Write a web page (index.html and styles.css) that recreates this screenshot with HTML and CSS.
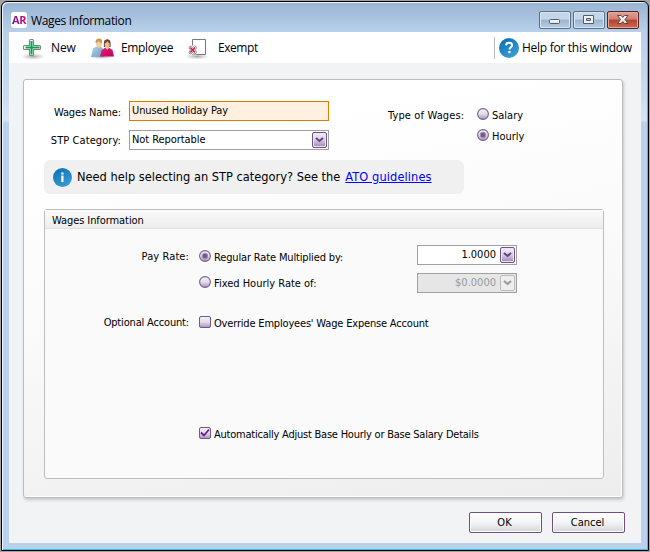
FILE: index.html
```html
<!DOCTYPE html>
<html lang="en">
<head>
<meta charset="utf-8">
<title>Wages Information</title>
<link rel="stylesheet" href="styles.css">
</head>
<body>
<svg class="defs" width="0" height="0" aria-hidden="true">
  <defs>
    <linearGradient id="orb" x1="0" y1="0" x2="0" y2="1"><stop offset="0" stop-color="#f5f1f8"/><stop offset=".5" stop-color="#e3dcea"/><stop offset="1" stop-color="#a692b9"/></linearGradient>
    <linearGradient id="blue" x1="0" y1="0" x2=".6" y2="1"><stop offset="0" stop-color="#056fb3"/><stop offset="1" stop-color="#3b9ad2"/></linearGradient>
    <radialGradient id="shade"><stop offset="0" stop-color="#777" stop-opacity=".65"/><stop offset="1" stop-color="#999" stop-opacity="0"/></radialGradient>
    <linearGradient id="shirt" x1="0" y1="0" x2="1" y2="1"><stop offset="0" stop-color="#b3d0e9"/><stop offset="1" stop-color="#6c9cc4"/></linearGradient>
    <linearGradient id="dress" x1="0" y1="0" x2="1" y2="1"><stop offset="0" stop-color="#e0237c"/><stop offset="1" stop-color="#bf0056"/></linearGradient>
    <linearGradient id="glyph" x1="0" y1="0" x2="0" y2="1"><stop offset="0" stop-color="#fff"/><stop offset="1" stop-color="#ddd"/></linearGradient>
  </defs>
</svg>
<div class="window">
  <header class="titlebar">
    <span class="app-icon">AR</span>
    <span class="title">Wages Information</span>
    <div class="controls">
      <span class="control"><svg width="30" height="16" viewBox="0 0 30 16"><rect x="9.500" y="7.500" width="10" height="4" rx="1" fill="url(#glyph)" stroke="#535c69"/></svg></span>
      <span class="control"><svg width="30" height="16" viewBox="0 0 30 16"><path d="M9.500 3.500h10v8h-10zM12.500 6.500v2h4v-2z" fill="#f2f2f2" fill-rule="evenodd" stroke="#535c69"/></svg></span>
      <span class="control close"><svg width="30" height="16" viewBox="0 0 30 16"><path d="M9.500 3.500h3.500l1.800 1.900 1.800-1.900h3.400l-3 4 3 4h-3.400l-1.800-1.900-1.800 1.900H9.500l3-4z" fill="url(#glyph)" stroke="#5d4246"/></svg></span>
    </div>
  </header>
  <main class="client">
    <nav class="toolbar">
      <span class="tool new">
        <svg width="24" height="26" viewBox="0 0 24 26"><ellipse cx="12" cy="20.500" rx="12" ry="3.500" fill="url(#shade)"/><path d="M8.500 4.500a1 1 0 0 1 1-1h2a1 1 0 0 1 1 1v5h6a1 1 0 0 1 1 1v2a1 1 0 0 1-1 1h-6v5a1 1 0 0 1-1 1h-2a1 1 0 0 1-1-1v-5h-5a1 1 0 0 1-1-1v-2a1 1 0 0 1 1-1h5z" fill="#fff" stroke="#7d8683" stroke-width="1.200"/><path d="M10.500 5v13.500M4.500 11.500h14" stroke="#00a650" stroke-width="2"/></svg>
        <span class="tool-text">New</span>
      </span>
      <span class="tool employee">
        <svg width="26" height="24" viewBox="0 0 26 24"><ellipse cx="13" cy="18.500" rx="13" ry="2.800" fill="url(#shade)"/><path d="M2 19 4 10.500l3.500-2h4l3.500 3V19z" fill="url(#shirt)"/><path d="M8 8l1.500 2.500L11.500 8V6H8z" fill="#efc99c"/><path d="m9.500 10.500-1 6 1 2 1-2z" fill="#8aaecb"/><ellipse cx="10" cy="5.200" rx="3" ry="4" fill="#f3cda0"/><path d="M6.500 5C6.300 2 7.500.5 10 .5s3.500 2 3 4.500c-1.500 0-2.500-1-3.500-1.700C8.500 4.500 7.500 4.600 6.500 5z" fill="#c69b50"/><path d="m11 18.500 1.500-6 3-2.500h5l3 2 1.500 6.500z" fill="url(#dress)"/><path d="M15 9c-.5-5 0-7.500 3.200-7.500S22 4 21.500 9z" fill="#6b402e"/><ellipse cx="18.200" cy="6.500" rx="2.500" ry="3.500" fill="#edba8d"/><path d="m15.800 9.700 2.400 2 2.300-2z" fill="#edba8d"/><path d="M15.500 5.500c1.500-.4 2.300-1.500 2.800-2.500.5 1 1.500 2 2.900 2.500l-.5-3-2.500-1-2.500 1z" fill="#6b402e"/></svg>
        <span class="tool-text">Employee</span>
      </span>
      <span class="tool exempt">
        <svg width="24" height="24" viewBox="0 0 24 24"><ellipse cx="11" cy="19.500" rx="12" ry="3" fill="url(#shade)"/><path d="M6.500 2.500h13v15h-13z" fill="#fff" stroke="#777"/><path d="M2.500 8.500h8v9h-8z" fill="#f3f1f1"/><path d="m3.500 9.500 1.500-.5 1.700 1.700L8.400 9l1.600.5.5 1.500-1.700 2 1.700 2-.5 1.500-1.600.5-1.700-1.700L5 17l-1.500-.5L3 15l1.600-2L3 11z" fill="#fff" stroke="#888" stroke-width=".8"/><path d="m4.300 10.500 4.800 5m0-5-4.800 5" stroke="#c5223d" stroke-width="1.600"/></svg>
        <span class="tool-text">Exempt</span>
      </span>
      <span class="tool help">
        <svg width="20" height="20" viewBox="0 0 20 20"><circle cx="10" cy="10" r="10" fill="url(#blue)"/><path d="M7 7.400c.1-1.700 1.300-2.600 3-2.600s3.100.9 3.100 2.500c0 2-2.600 2-2.600 4.200" fill="none" stroke="#fff" stroke-width="1.900"/><rect x="9.300" y="13" width="2.200" height="2.200" fill="#fff"/></svg>
        <span class="tool-text">Help for this window</span>
      </span>
    </nav>
    <section class="panel">
      <div class="top">
        <div class="fields">
          <label class="caption name-caption">Wages Name:</label>
          <div class="field active"><span class="name-value">Unused Holiday Pay</span></div>
          <label class="caption stp-caption">STP Category:</label>
          <div class="field combo"><span class="stp-value">Not Reportable</span><i class="drop"><svg width="9" height="6" viewBox="0 0 9 6"><path d="m1 1 3.500 3L8 1" fill="none" stroke="currentColor" stroke-width="2"/></svg></i></div>
        </div>
        <span class="caption type-caption">Type of Wages:</span>
        <div class="types">
          <span class="option"><svg class="mark" width="12" height="12" viewBox="0 0 12 12"><circle cx="6" cy="6" r="5.400" fill="url(#orb)" stroke="#756189" stroke-width="1.100"/></svg><span>Salary</span></span>
          <span class="option"><svg class="mark" width="12" height="12" viewBox="0 0 12 12"><circle cx="6" cy="6" r="5.400" fill="url(#orb)" stroke="#756189" stroke-width="1.100"/><circle cx="6" cy="6" r="2.800" fill="#735d85" stroke="#a08fb0"/></svg><span>Hourly</span></span>
        </div>
      </div>
      <div class="notice">
        <svg width="19" height="19" viewBox="0 0 19 19"><circle cx="9.500" cy="9.500" r="9.500" fill="url(#blue)"/><path d="M8.300 4.500h2.200v1.900H8.300zM8.300 7.500h2.200v6.500H8.300z" fill="#fff"/></svg>
        <span class="notice-text">Need help selecting an STP category? See the</span>
        <a class="link">ATO guidelines</a>
      </div>
      <section class="group">
        <h2 class="group-head"><span>Wages Information</span></h2>
        <div class="group-body">
          <span class="caption pay-caption">Pay Rate:</span>
          <span class="option"><svg class="mark" width="12" height="12" viewBox="0 0 12 12"><circle cx="6" cy="6" r="5.400" fill="url(#orb)" stroke="#756189" stroke-width="1.100"/><circle cx="6" cy="6" r="2.800" fill="#735d85" stroke="#a08fb0"/></svg><span class="regular-text">Regular Rate Multiplied by:</span></span>
          <div class="field combo amount"><span>1.0000</span><i class="drop"><svg width="9" height="6" viewBox="0 0 9 6"><path d="m1 1 3.500 3L8 1" fill="none" stroke="currentColor" stroke-width="2"/></svg></i></div>
          <span class="option fixed"><svg class="mark" width="12" height="12" viewBox="0 0 12 12"><circle cx="6" cy="6" r="5.400" fill="url(#orb)" stroke="#756189" stroke-width="1.100"/></svg><span>Fixed Hourly Rate of:</span></span>
          <div class="field combo amount disabled"><span>$0.0000</span><i class="drop"><svg width="9" height="6" viewBox="0 0 9 6"><path d="m1 1 3.500 3L8 1" fill="none" stroke="currentColor" stroke-width="2"/></svg></i></div>
          <span class="caption optional-caption">Optional Account:</span>
          <span class="option override"><svg class="mark" width="12" height="12" viewBox="0 0 12 12"><rect x=".5" y=".5" width="11" height="11" rx="1.500" fill="url(#orb)" stroke="#6f5a84"/></svg><span class="override-text">Override Employees' Wage Expense Account</span></span>
          <span class="option adjust"><svg class="mark" width="12" height="12" viewBox="0 0 12 12"><rect x=".5" y=".5" width="11" height="11" rx="1.500" fill="url(#orb)" stroke="#6f5a84"/><path d="m2 5.500 3 3L10 2.500" fill="none" stroke="#6a1b9a" stroke-width="1.800"/></svg><span class="adjust-text">Automatically Adjust Base Hourly or Base Salary Details</span></span>
        </div>
      </section>
    </section>
    <footer class="actions">
      <button class="button ok">OK</button>
      <button class="button cancel">Cancel</button>
    </footer>
  </main>
</div>
</body>
</html>
```
FILE: styles.css
```css
* { box-sizing: border-box; }
body {
  margin: 0;
  width: 650px;
  height: 552px;
  overflow: hidden;
  background: #a3a3a3;
  padding: 1px;
  font: 11px/14px "DejaVu Sans Condensed", "DejaVu Sans", sans-serif;
  color: #000;
}
.defs { display: block; height: 0; }
.window {
  width: 648px;
  height: 550px;
  border: 1px solid #000;
  border-radius: 6px 6px 0 0;
  padding: 0 7px 6px 7px;
  background: linear-gradient(#98b4d2, #b9d0ea 30px, #c7dcf1 90px, #d7e6f5 118px, #b9d1ea 121px);
  box-shadow: inset 1px 1px #edf5fc, inset -1px -1px #35c3df;
}
.titlebar { height: 30px; display: flex; align-items: flex-start; }
.app-icon {
  width: 16px; height: 16px; margin: 10px 0 0 2px;
  border-radius: 3px;
  color: #8a168f; font: bold 11px/16px "Open Sans", sans-serif;
  text-align: center; letter-spacing: -.5px;
  background: linear-gradient(90deg, #5b2494, #e5007e) text, #fff;
  -webkit-text-fill-color: transparent;
}
.title { margin: 10px 0 0 4px; font: 12px/18px "Open Sans", sans-serif; letter-spacing: -.35px; }
.controls { display: flex; gap: 2px; margin: 9px 2px 0 auto; }
.control {
  width: 32px; height: 18px; border: 1px solid #5b7188; border-radius: 2px;
  background: linear-gradient(#c5d6e8 45%, #9cb4cf 50%, #b7cee5);
  box-shadow: inset 0 0 0 1px #d8e5f2;
}
.control svg { display: block; }
.close {
  border-color: #56222a;
  background: linear-gradient(#dfa398, #d17e6c 45%, #b5412c 50%, #c96d55);
  box-shadow: inset 0 0 0 1px #e4a99b;
}
.client { height: 511px; background: #f2f3f5; }
.toolbar {
  height: 31px; display: flex; align-items: flex-start; background: #fff;
  font: 12px/18px "Open Sans", sans-serif;
}
.tool { display: flex; align-items: flex-start; white-space: nowrap; }
.tool-text { letter-spacing: -.35px; }
.new { width: 68px; margin-left: 12px; }
.new svg { margin-top: 4px; }
.new .tool-text { margin: 7px 0 0 6px; letter-spacing: -.1px; }
.employee { width: 97px; }
.employee svg { margin-top: 6px; }
.employee .tool-text { margin: 7px 0 0 6px; }
.exempt svg { margin-top: 5px; }
.exempt .tool-text { margin: 7px 0 0 8px; letter-spacing: -.45px; }
.help { width: 147px; margin: 5px 0 0 auto; padding-left: 4px; border-left: 1px solid #b9b9b9; height: 22px; }
.help svg { margin-top: 1px; }
.help .tool-text { margin: 2px 0 0 3px; letter-spacing: -.28px; }
.panel {
  width: 600px; height: 419px; margin: 16px 0 0 14px;
  border: 1px solid #bcbcbc; border-radius: 3px;
  padding: 21px 18px 18px 20px;
  background: linear-gradient(170deg, #fff 15%, #fafafa 50%, #ededed);
  box-shadow: inset -1px -1px #fff, 1px 2px 3px #c8c8c8;
}
.top { display: flex; height: 59px; }
.fields { display: grid; grid-template: 20px 20px / 77px 200px; gap: 9px 8px; }
.caption { justify-self: end; white-space: nowrap; line-height: 14px; padding-top: 5px; }
.name-caption { letter-spacing: -.12px; }
.stp-caption { padding-top: 4px; letter-spacing: .08px; }
.field {
  display: flex; align-items: center; justify-content: space-between;
  height: 20px; border: 1px solid #a0a0a0; padding: 0 1px 0 2px; background: #fff;
}
.active { border-color: #e07b00; background: #fff0e0; }
.name-value { letter-spacing: -.12px; }
.stp-value { letter-spacing: -.07px; }
.drop {
  width: 15px; height: 16px; border: 1px solid #6f5288; border-radius: 2px;
  display: flex; align-items: center; justify-content: center;
  color: #5f437c; background: linear-gradient(#f3eef7, #d9cde2 50%, #9c84b2);
  box-shadow: inset 0 0 0 1px #ece5f2;
}
.type-caption { margin-left: 59px; padding-top: 8px; width: 77px; letter-spacing: .13px; }
.types { display: flex; flex-direction: column; gap: 7px; margin: 7px 0 0 12px; }
.option { display: flex; align-items: flex-start; gap: 3px; height: 14px; white-space: nowrap; }
.mark { flex: none; }
.option span { padding-top: 1px; }
.notice {
  width: 420px; height: 34px; border-radius: 6px; background: #f0f0f0;
  display: flex; align-items: center; padding-left: 9px;
  font-size: 12.7px; line-height: 16px; white-space: nowrap;
}
.notice-text { margin-left: 5px; }
.link { margin-left: 5px; color: #00f; text-decoration: underline; letter-spacing: .1px; }
.group {
  width: 560px; height: 270px; margin-top: 15px;
  border: 1px solid #bebebe; border-radius: 3px; background: #fafafa;
}
.group-head {
  height: 19px; margin: 0; padding: 4px 0 0 7px; font: inherit; letter-spacing: -.08px;
  border-bottom: 1px solid #e0e0e0; background: linear-gradient(#fafafa, #ededed);
}
.group-body {
  display: grid; grid-template: 28px 38px 111px 20px / 144px 209px 100px;
  column-gap: 10px; padding-top: 16px;
}
.group-body .option { margin-top: 5px; }
.group-body .fixed { margin-top: 3px; }
.group-body .amount { width: 100px; margin-left: -1px; }
.amount { justify-content: flex-end; gap: 4px; }
.fixed, .adjust { grid-column: 2; }
.adjust { grid-row: 4; }
.pay-caption { letter-spacing: .1px; }
.optional-caption { grid-row: 3; letter-spacing: -.17px; }
.regular-text { letter-spacing: -.15px; }
.override-text { letter-spacing: -.18px; }
.adjust-text { letter-spacing: -.23px; }
.disabled { color: #999; background: #e6e6e6; }
.disabled .drop { color: #999; border-color: #bbb; background: #eee; box-shadow: none; }
.actions { display: flex; justify-content: flex-end; gap: 10px; padding: 14px 16px 0 0; }
.button {
  width: 73px; height: 21px; padding: 0 2px 0 0; font: inherit; color: #000;
  border: 1px solid #6d4f82; border-radius: 2px;
  background: linear-gradient(#fff, #f3f4f5 50%, #d3d6d9);
  box-shadow: inset 0 0 0 1px #fff;
}
```
